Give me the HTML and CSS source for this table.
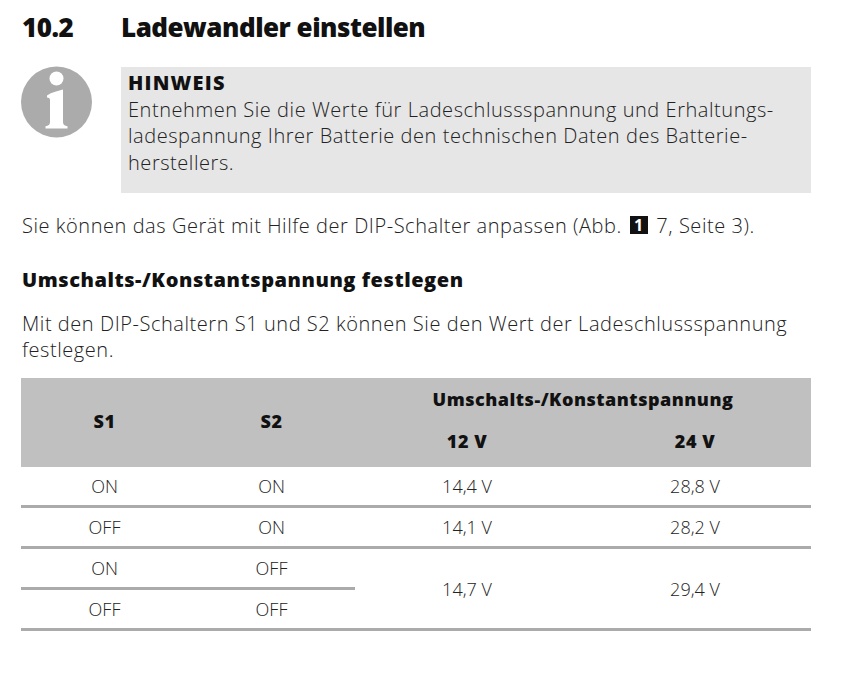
FILE: index.html
```html
<!DOCTYPE html>
<html lang="de">
<head>
<meta charset="utf-8">
<title>Ladewandler einstellen</title>
<link rel="stylesheet" href="styles.css">
</head>
<body>
<div class="page">
  <h1 class="title"><span class="num">10.2</span><span>Ladewandler einstellen</span></h1>

  <div class="note">
    <div class="note-icon">
      <svg width="72" height="72" viewBox="0 0 72 72">
        <circle cx="35.5" cy="36" r="35.5" fill="#ababab"/>
        <circle cx="35.5" cy="12.5" r="7" fill="#fff"/>
        <path d="M26 29.5 Q29 27 35 25.5 L42 23.5 L42 56 Q42 59.5 45.5 60 L46.5 60.3 L46.5 62.5 L24.5 62.5 L24.5 60.3 L25.5 60 Q29 59.5 29 56 L29 34 Q29 31.5 26 31.5 Z" fill="#fff"/>
      </svg>
    </div>
    <div class="note-box">
      <div class="note-title">HINWEIS</div>
      <p>Entnehmen Sie die Werte für Ladeschlussspannung und Erhaltungs-<br>ladespannung Ihrer Batterie den technischen Daten des Batterie-<br>herstellers.</p>
    </div>
  </div>

  <p class="text">Sie können das Gerät mit Hilfe der DIP-Schalter anpassen (Abb. <span class="badge">1</span> 7, Seite 3).</p>

  <h2 class="sub">Umschalts-/Konstantspannung festlegen</h2>

  <p class="text two">Mit den DIP-Schaltern S1 und S2 können Sie den Wert der Ladeschlussspannung<br>festlegen.</p>

  <table class="tbl">
    <colgroup>
      <col class="c1"><col class="c2"><col class="c3"><col class="c4">
    </colgroup>
    <thead>
      <tr class="h1">
        <th rowspan="2" class="sw">S1</th>
        <th rowspan="2" class="sw">S2</th>
        <th colspan="2">Umschalts-/Konstantspannung</th>
      </tr>
      <tr class="h2">
        <th>12 V</th>
        <th>24 V</th>
      </tr>
    </thead>
    <tbody>
      <tr class="line"><td>ON</td><td>ON</td><td>14,4 V</td><td>28,8 V</td></tr>
      <tr class="line"><td>OFF</td><td>ON</td><td>14,1 V</td><td>28,2 V</td></tr>
      <tr><td class="rule">ON</td><td class="rule">OFF</td><td rowspan="2" class="rule">14,7 V</td><td rowspan="2" class="rule">29,4 V</td></tr>
      <tr><td class="rule">OFF</td><td class="rule">OFF</td></tr>
    </tbody>
  </table>
</div>
</body>
</html>
```
FILE: styles.css
```css
html, body {
  margin: 0;
  padding: 0;
  background: #fff;
}
body {
  font-family: "Open Sans", "Liberation Sans", sans-serif;
  color: #1a1a1a;
}
.page {
  padding: 9px 49px 0 21px;
}
.title {
  margin: 0;
  font-size: 26px;
  font-weight: 800;
  line-height: 36px;
  display: flex;
  color: #111;
  letter-spacing: -0.5px;
}
.title .num {
  width: 99px;
  padding-left: 1px;
}
.note {
  display: flex;
  margin-top: 22px;
}
.note-icon {
  width: 100px;
}
.note-icon svg {
  display: block;
  margin-top: -1px;
}
.note-box {
  flex: 1;
  background: #e6e6e6;
  padding: 3px 8px 17px 7px;
  font-size: 20px;
  line-height: 26.6px;
  font-weight: 300;
  letter-spacing: 0.55px;
}
.note-title {
  font-weight: 800;
  color: #111;
  letter-spacing: 1.2px;
}
.note-box p {
  margin: 0;
  color: #222;
}
.text {
  margin: 19px 0 0 1px;
  font-size: 20px;
  line-height: 27px;
  font-weight: 300;
  letter-spacing: 0.55px;
  color: #222;
}
.badge {
  display: inline-block;
  background: #111;
  color: #fff;
  font-weight: 700;
  font-size: 16px;
  line-height: 18px;
  height: 18px;
  width: 18px;
  letter-spacing: 0;
  text-align: center;
  margin: 0 3px 0 2px;
  vertical-align: 2px;
}
.sub {
  margin: 27px 0 0 1px;
  font-size: 20px;
  font-weight: 800;
  line-height: 28px;
  letter-spacing: 0.55px;
  color: #111;
}
.text.two {
  margin-top: 17px;
  line-height: 26px;
}
.tbl {
  margin-top: 15px;
  width: 790px;
  border-collapse: collapse;
  font-size: 18px;
}
.c1 { width: 167px; }
.c2 { width: 167px; }
.c3 { width: 224px; }
.c4 { width: 232px; }
.tbl th {
  background: #c0c0c0;
  font-weight: 800;
  color: #111;
  padding: 0;
  text-align: center;
  letter-spacing: 0.5px;
}
.tbl th.sw { padding-bottom: 3px; }
.h1 th { height: 41px; }
.h2 th { height: 44px; padding-bottom: 4px; }
.tbl td {
  text-align: center;
  height: 38px;
  padding: 0;
  font-weight: 300;
  color: #222;
}
.line td,
.tbl td.rule {
  border-bottom: 3px solid #ababab;
}
```
